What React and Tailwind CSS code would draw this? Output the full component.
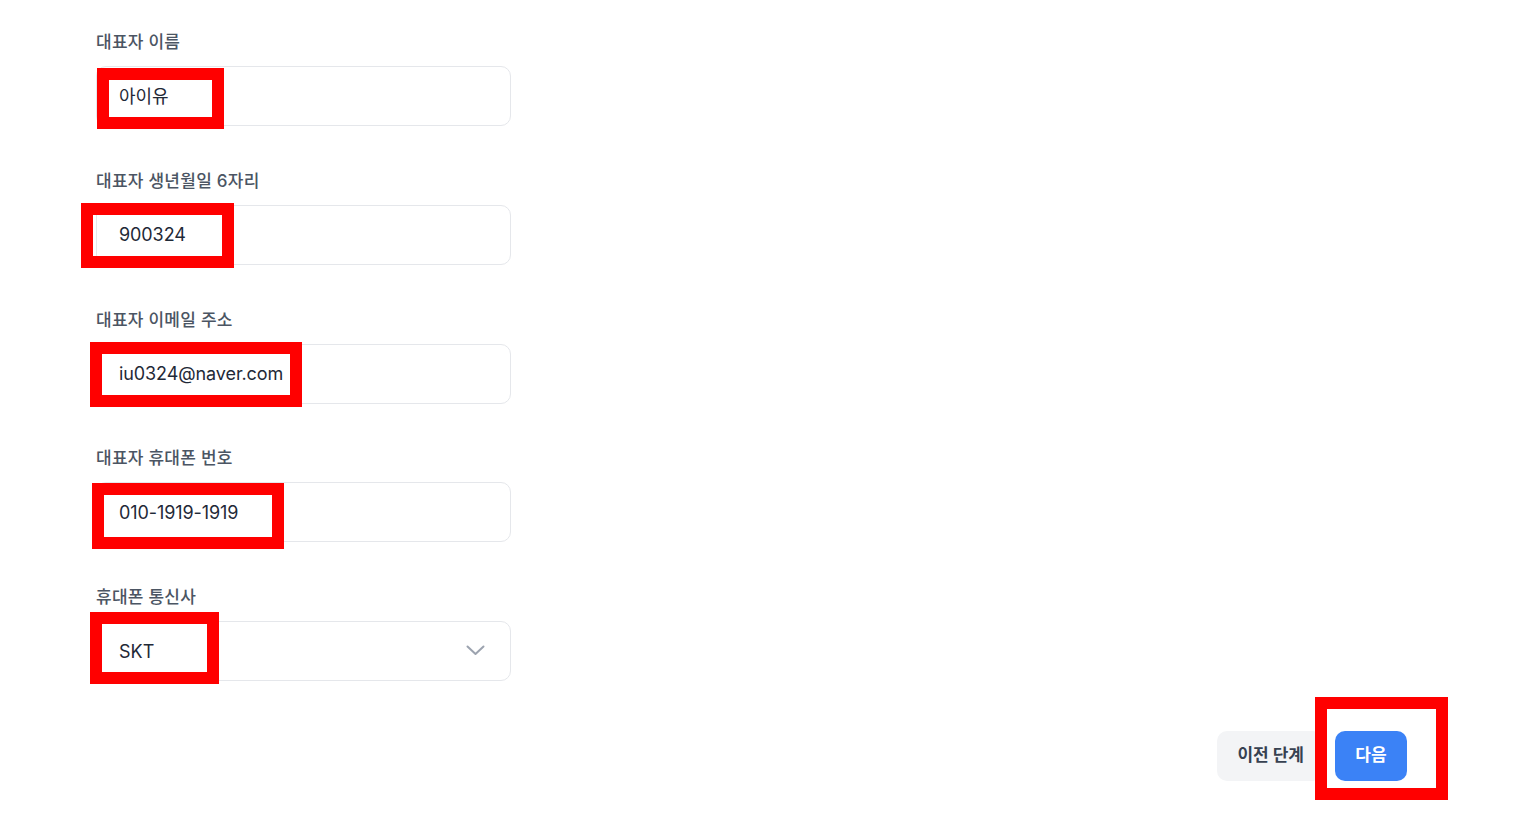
const fields = [
  { label: "대표자 이름", value: "아이유" },
  { label: "대표자 생년월일 6자리", value: "900324" },
  { label: "대표자 이메일 주소", value: "iu0324@naver.com" },
  { label: "대표자 휴대폰 번호", value: "010-1919-1919" },
];

// red annotation boxes drawn over the screenshot
const marks = [
  "left-[97px] top-[68px] w-[127px] h-[61px]",
  "left-[81px] top-[203px] w-[153px] h-[65px]",
  "left-[90px] top-[342px] w-[212px] h-[65px]",
  "left-[92px] top-[483px] w-[192px] h-[66px]",
  "left-[90px] top-[612px] w-[129px] h-[72px]",
  "left-[1315px] top-[697px] w-[133px] h-[103px]",
];

function Label({ children }) {
  return (
    <p className="h-6 text-[17px] font-medium leading-6 tracking-[0.015em] text-[#4b5563]">
      {children}
    </p>
  );
}

function Field({ label, value }) {
  return (
    <div className="flex flex-col gap-3">
      <Label>{label}</Label>
      <div className="flex h-[60px] w-[415px] items-center rounded-[10px] border border-[#e5e7eb] bg-white pl-[22px] text-[18px] tracking-[-0.005em] text-[#1f2937]">
        {value}
      </div>
    </div>
  );
}

export default function App() {
  return (
    <div
      className="relative h-[834px] w-full overflow-hidden bg-white"
      style={{ fontFamily: 'Inter, "Noto Sans CJK KR", sans-serif' }}
    >
      <section className="flex flex-col pl-[96px] pr-[111px] pt-[30px]">
        <div className="flex flex-col gap-[42.75px]">
          {fields.map((f) => (
            <Field key={f.label} label={f.label} value={f.value} />
          ))}
          <div className="flex flex-col gap-3">
            <Label>휴대폰 통신사</Label>
            <div className="flex h-[60px] w-[415px] items-center justify-between rounded-[10px] border border-[#e5e7eb] bg-white pl-[22px] pr-[25px] text-[18px] text-[#1f2937]">
              <span>SKT</span>
              <svg width="19" height="11" viewBox="0 0 19 11" fill="none" className="-mt-[2px]">
                <path
                  d="M1.5 1.5 L9.5 9 L17.5 1.5"
                  stroke="#9ca3af"
                  strokeWidth="2"
                  strokeLinecap="round"
                  strokeLinejoin="round"
                />
              </svg>
            </div>
          </div>
        </div>
        <div className="mt-[50px] flex justify-end gap-3">
          <button className="h-[50px] rounded-[10px] bg-[#f3f4f6] pl-5 pr-[19px] text-[17px] font-bold text-[#374151]">
            이전 단계
          </button>
          <button className="h-[50px] w-[72px] rounded-[10px] bg-[#3b82f6] text-[17px] font-bold text-white">
            다음
          </button>
        </div>
      </section>
      {marks.map((m) => (
        <div
          key={m}
          className={`pointer-events-none absolute border-[12px] border-[#ff0000] ${m}`}
        />
      ))}
    </div>
  );
}
